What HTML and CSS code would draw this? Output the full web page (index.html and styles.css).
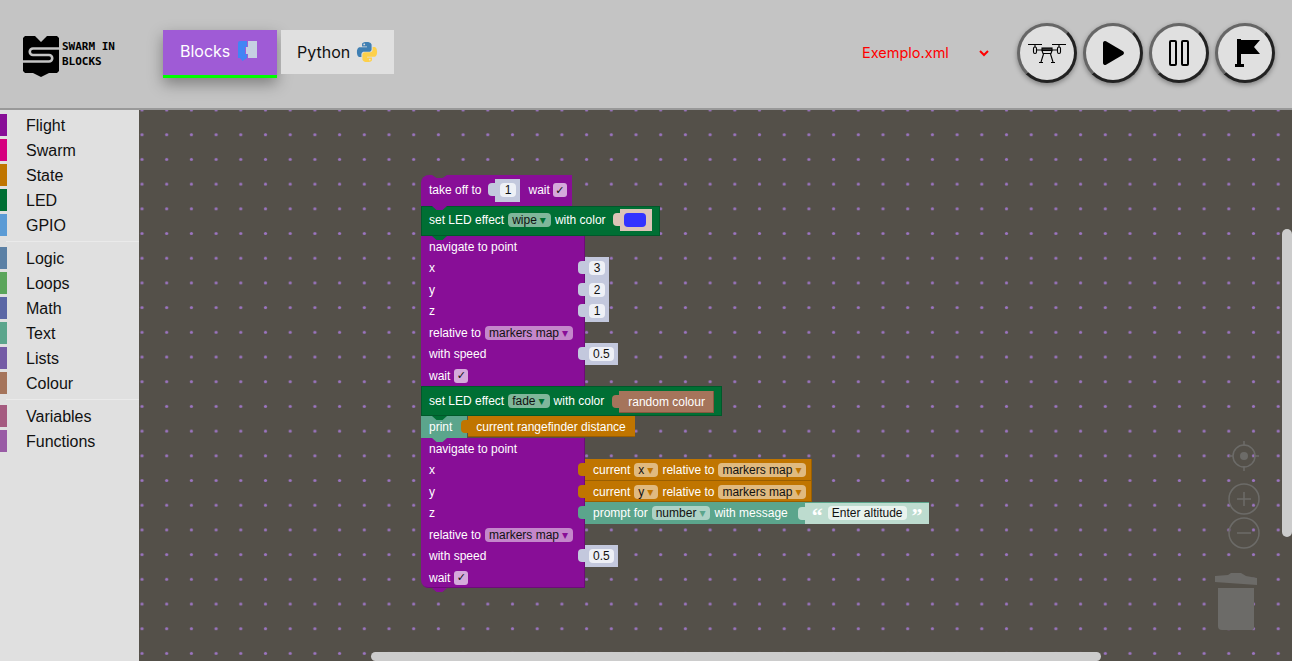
FILE: index.html
```html
<!DOCTYPE html>
<html lang="en">
<head>
    <meta charset="UTF-8">
    <meta name="viewport" content="width=device-width, initial-scale=1.0">
    <title>Swarm in Blocks</title>
    <link rel="stylesheet" href="styles.css">
</head>
<body>
    <header class="topbar">
        <div class="logo">
            <svg class="logo-mark" width="36" height="41" viewBox="23 36 36 41">
                <path d="M25 36h10l6 6 6-6h10l2 2v33l-2 2h-8l-8 4-8-4H25l-2-2V38z" fill="#000"/>
                <path d="M59 48.500H33a3 3 0 0 0 0 6.500h16a3.200 3.200 0 0 1 0 6.500H23" fill="none" stroke="#c4c4c4" stroke-width="2.600"/>
            </svg>
            <div class="logo-text">SWARM IN<br>BLOCKS</div>
        </div>
        <nav class="tabs">
            <div class="tab tab-active">Blocks
                <svg width="19" height="20" viewBox="0 0 19 20">
                    <path d="M0 2a2 2 0 0 1 2-2h7v6H7v7h2v4l-4.500 3L2 17H0z" fill="#4285f4"/>
                    <path d="M10 0h9v17h-9v-4H8V6h2z" fill="#c5d0e2"/>
                </svg>
            </div>
            <div class="tab tab-python">Python
                <svg width="22" height="22" viewBox="0 0 24 24">
                    <path d="M11.900 1C6.300 1 6.600 3.400 6.600 3.400v2.500H12v.8H4.500S1 6.300 1 12s3 5.500 3 5.500h1.900v-2.700s-.1-3 3-3h5.200s2.900 0 2.900-2.800V3.800S16.500 1 11.900 1zM9 2.700a1 1 0 1 1 0 2 1 1 0 0 1 0-2z" fill="#3f7fb3"/>
                    <path d="M12.100 23c5.600 0 5.300-2.400 5.300-2.400v-2.500H12v-.8h7.500S23 17.700 23 12s-3-5.500-3-5.500h-1.900v2.700s.1 3-3 3H9.900S7 12.200 7 15v5.200S7.500 23 12.100 23zM15 21.300a1 1 0 1 1 0-2 1 1 0 0 1 0 2z" fill="#fdd04a"/>
                </svg>
            </div>
        </nav>
        <div class="file-select">
            <span>Exemplo.xml</span>
            <svg width="10" height="7" viewBox="0 0 10 7"><path d="M1 1l4 4 4-4" fill="none" stroke="#f00" stroke-width="2"/></svg>
        </div>
        <div class="round-buttons">
            <button class="round-btn">
                <svg width="40" height="22" viewBox="0 0 40 22" fill="none" stroke="#000" stroke-width="1.100">
                    <path d="M1 2.500h14M25 2.500h14"/>
                    <path d="M8 3v2M32 3v2"/>
                    <rect x="6.500" y="5" width="3" height="6.500" rx="1.500"/>
                    <rect x="30.500" y="5" width="3" height="6.500" rx="1.500"/>
                    <path d="M9.500 8H15M25 8h5.500"/>
                    <rect x="15" y="6" width="10" height="2.500" fill="#333"/>
                    <path d="M15 8.500l1 3h8l1-3M16 11.500h8"/>
                    <path d="M16.500 12l-2.500 8M23.500 12l2.500 8M12 20.500h4M24 20.500h4"/>
                </svg>
            </button>
            <button class="round-btn">
                <svg width="24" height="26" viewBox="0 0 24 26"><path d="M2 3a2 2 0 0 1 3-1.700l17 10a2 2 0 0 1 0 3.400l-17 10A2 2 0 0 1 2 23z" fill="#000"/></svg>
            </button>
            <button class="round-btn">
                <svg width="20" height="26" viewBox="0 0 20 26" fill="none" stroke="#000" stroke-width="2">
                    <rect x="1" y="1" width="6" height="24" rx="1"/>
                    <rect x="13" y="1" width="6" height="24" rx="1"/>
                </svg>
            </button>
            <button class="round-btn">
                <svg class="flag" width="26" height="30" viewBox="0 0 26 30">
                    <path d="M2 1h4v25h3v3H0v-3h2z" fill="#000"/>
                    <path d="M6 2h19l-6 7 6 7H6z" fill="#000"/>
                </svg>
            </button>
        </div>
    </header>

    <main class="main">
        <aside class="toolbox">
            <div class="cat"><i class="c-flight"></i>Flight</div>
            <div class="cat"><i class="c-swarm"></i>Swarm</div>
            <div class="cat"><i class="c-state"></i>State</div>
            <div class="cat"><i class="c-led"></i>LED</div>
            <div class="cat"><i class="c-gpio"></i>GPIO</div>
            <div class="cat-sep"></div>
            <div class="cat"><i class="c-logic"></i>Logic</div>
            <div class="cat"><i class="c-loops"></i>Loops</div>
            <div class="cat"><i class="c-math"></i>Math</div>
            <div class="cat"><i class="c-text"></i>Text</div>
            <div class="cat"><i class="c-lists"></i>Lists</div>
            <div class="cat"><i class="c-colour"></i>Colour</div>
            <div class="cat-sep"></div>
            <div class="cat"><i class="c-vars"></i>Variables</div>
            <div class="cat"><i class="c-funcs"></i>Functions</div>
        </aside>

        <section class="workspace">
            <svg class="grid" width="100%" height="100%">
                <defs>
                    <pattern id="dots" x="-9.35" y="-12.35" width="24.7" height="24.7" patternUnits="userSpaceOnUse">
                        <circle cx="12.35" cy="12.35" r="1.6" fill="#9c74c2"/>
                    </pattern>
                </defs>
                <rect width="100%" height="100%" fill="url(#dots)"/>
            </svg>

            <div class="stack">
                <div class="block flight first notch takeoff">
                    <span>take off to</span>
                    <span class="value num"><b>1</b></span>
                    <span class="label-gap">wait</span>
                    <span class="check">✓</span>
                </div>
                <div class="block led notch led-row">
                    <span>set LED effect</span>
                    <span class="drop">wipe<em>▾</em></span>
                    <span>with color</span>
                    <span class="value swatch-value"><u class="swatch"></u></span>
                </div>

                <div class="nav">
                    <div class="nav-row"><div class="cell">navigate to point</div></div>
                    <div class="nav-row"><div class="cell">x</div><span class="value num attach"><b>3</b></span></div>
                    <div class="nav-row"><div class="cell">y</div><span class="value num attach"><b>2</b></span></div>
                    <div class="nav-row"><div class="cell">z</div><span class="value num attach"><b>1</b></span></div>
                    <div class="nav-row"><div class="cell">relative to <span class="drop">markers map<em>▾</em></span></div></div>
                    <div class="nav-row"><div class="cell">with speed</div><span class="value num attach"><b>0.5</b></span></div>
                    <div class="nav-row"><div class="cell">wait <span class="check">✓</span></div></div>
                </div>

                <div class="block led notch fade-row">
                    <span>set LED effect</span>
                    <span class="drop">fade<em>▾</em></span>
                    <span>with color</span>
                    <span class="value random">random colour</span>
                </div>
                <div class="block print notch print-row">
                    <span>print</span>
                    <span class="value range">current rangefinder distance</span>
                </div>

                <div class="nav">
                    <div class="nav-row"><div class="cell">navigate to point</div></div>
                    <div class="nav-row"><div class="cell">x</div>
                        <span class="value state attach">current <span class="drop">x<em>▾</em></span> relative to <span class="drop">markers map<em>▾</em></span></span>
                    </div>
                    <div class="nav-row"><div class="cell">y</div>
                        <span class="value state attach">current <span class="drop">y<em>▾</em></span> relative to <span class="drop">markers map<em>▾</em></span></span>
                    </div>
                    <div class="nav-row"><div class="cell">z</div>
                        <span class="value prompt attach">prompt for <span class="drop">number<em>▾</em></span> with message
                            <span class="value text-value"><q>“</q><b>Enter altitude</b><q>”</q></span>
                        </span>
                    </div>
                    <div class="nav-row"><div class="cell">relative to <span class="drop">markers map<em>▾</em></span></div></div>
                    <div class="nav-row"><div class="cell">with speed</div><span class="value num attach"><b>0.5</b></span></div>
                    <div class="nav-row"><div class="cell last">wait <span class="check">✓</span></div></div>
                </div>
            </div>

            <svg class="controls" width="50" height="195" viewBox="0 0 50 195" fill="none" stroke="#6c6b68" stroke-width="1.500">
                <circle cx="29" cy="16" r="11"/>
                <path d="M29 1v5M29 26v5M14 16h4M40 16h4"/>
                <circle cx="29" cy="16" r="4" fill="#6c6b68" stroke="none"/>
                <circle cx="29" cy="59" r="15"/>
                <path d="M22 59h14M29 52v14"/>
                <circle cx="29" cy="93" r="15"/>
                <path d="M22 93h14"/>
                <path d="M0 137l0-1 13-1 3-2h10l5 3 11 2v7L0 142z" fill="#6c6b68" stroke="none"/>
                <path d="M3 148h36v40a2 2 0 0 1-2 2H7a4 4 0 0 1-4-4z" fill="#6c6b68" stroke="none"/>
            </svg>
            <div class="scroll-v"></div>
            <div class="scroll-h"></div>
        </section>
    </main>
</body>
</html>
```

FILE: styles.css
```css
* {
    box-sizing: border-box;
}

html, body {
    height: 100%;
}

body {
    margin: 0;
    overflow: hidden;
    display: flex;
    flex-direction: column;
    font-family: "Liberation Sans", Arial, sans-serif;
}

/* top bar */
.topbar {
    height: 110px;
    flex: none;
    display: flex;
    align-items: flex-start;
    background-color: #c4c4c4;
    border-bottom: 2px solid #999;
}

.logo {
    width: 140px;
    margin: 36px 0 0 23px;
    display: flex;
}

.logo-mark {
    flex: none;
}

.logo-text {
    margin: 3px 0 0 3px;
    font-family: "DejaVu Sans Mono", monospace;
    font-weight: bold;
    font-size: 11px;
    line-height: 15px;
    color: #000;
    white-space: nowrap;
}

.tabs {
    display: flex;
    align-items: flex-start;
    gap: 4px;
    margin-top: 30px;
}

.tab {
    height: 44px;
    width: 113px;
    display: flex;
    align-items: center;
    gap: 6px;
    padding-left: 16px;
    font-family: Inter, sans-serif;
    font-size: 16px;
    color: #111;
    background-color: #e0e0e0;
}

.tab-python {
    padding-bottom: 1px;
}

.tab-active {
    height: 48px;
    width: 114px;
    gap: 8px;
    padding: 0 0 4px 17px;
    color: #fff;
    background-color: #9f5bd6;
    border-bottom: 3px solid #0f0;
    box-shadow: 0 6px 14px rgba(0, 0, 0, 0.35);
}

.file-select {
    width: 127px;
    margin: 44px 0 0 468px;
    display: flex;
    align-items: center;
    justify-content: space-between;
    font-family: Inter, sans-serif;
    font-size: 14.5px;
    line-height: 18px;
    color: #f00;
}

.round-buttons {
    display: flex;
    gap: 6px;
    margin: 23px 0 0 28px;
}

.round-btn {
    width: 60px;
    height: 60px;
    padding: 0;
    display: flex;
    align-items: center;
    justify-content: center;
    background-color: #e0e0e0;
    border: 3px solid;
    border-color: #666 #222 #222 #666;
    border-radius: 50%;
    box-shadow: 0 2px 5px rgba(0, 0, 0, 0.35);
}

.flag {
    margin-left: 6px;
}

/* main area */
.main {
    flex: 1;
    display: flex;
    min-height: 0;
}

.toolbox {
    width: 139px;
    flex: none;
    padding-top: 3px;
    background-color: #e0e0e0;
}

.cat {
    height: 25px;
    display: flex;
    align-items: center;
    padding-left: 26px;
    position: relative;
    font-size: 16px;
    color: #111;
}

.cat i {
    position: absolute;
    left: 0;
    top: 1px;
    width: 7px;
    height: 22px;
}

.cat-sep {
    height: 8px;
    margin-left: 6px;
    padding-top: 3px;
}

.cat-sep::after {
    content: "";
    display: block;
    height: 1px;
    background-color: #eaeaea;
}

.c-flight { background-color: #880e97; }
.c-swarm { background-color: #d6007e; }
.c-state { background-color: #c07500; }
.c-led { background-color: #006f34; }
.c-gpio { background-color: #5b9bd5; }
.c-logic { background-color: #5b80a5; }
.c-loops { background-color: #5ba55b; }
.c-math { background-color: #5b67a5; }
.c-text { background-color: #5ba58c; }
.c-lists { background-color: #745ba5; }
.c-colour { background-color: #a5745b; }
.c-vars { background-color: #a55b80; }
.c-funcs { background-color: #995ba5; }

.workspace {
    flex: 1;
    position: relative;
    overflow: hidden;
    background-color: #545049;
}

.grid {
    position: absolute;
    left: 0;
    top: 0;
}

/* blocks */
.stack {
    position: absolute;
    left: 282px;
    top: 65px;
    width: 520px;
    display: flex;
    flex-direction: column;
    align-items: flex-start;
    font-size: 12px;
    color: #fff;
    white-space: nowrap;
}

.block {
    position: relative;
    display: flex;
    align-items: center;
    gap: 4px;
    padding-left: 8px;
}

.flight { background-color: #880e97; }
.led {
    background-color: #006f34;
    box-shadow: inset 0 0 0 1px #00592a;
}
.print { background-color: #5ba58c; }

.notch::after {
    content: "";
    position: absolute;
    z-index: 3;
    left: 11px;
    bottom: -4px;
    width: 15px;
    height: 4px;
    background-color: inherit;
    clip-path: polygon(0 0, 100% 0, 70% 100%, 30% 100%);
}

.first {
    border-radius: 8px 0 0 0;
}

.first::before {
    content: "";
    position: absolute;
    left: 11px;
    top: 0;
    width: 15px;
    height: 3px;
    background-color: #545049;
    clip-path: polygon(0 0, 100% 0, 70% 100%, 30% 100%);
}

.takeoff {
    width: 151px;
    height: 31px;
    padding-bottom: 1px;
}

.takeoff .check {
    margin-left: -1px;
}

.led-row {
    width: 239px;
    height: 30px;
    padding-bottom: 2px;
}

.fade-row {
    width: 301px;
    height: 30px;
}

.print-row {
    width: 214px;
    height: 22px;
    background: linear-gradient(to right, #5ba58c 46px, transparent 46px);
    align-items: flex-start;
    padding-top: 4px;
}

.print-row::after {
    background: #5ba58c;
}

/* pieces inside a block */
.drop {
    display: inline-flex;
    align-items: center;
    height: 14px;
    padding: 0 5px 0 4px;
    border-radius: 4px;
    color: #111;
    background-color: rgba(255, 255, 255, 0.5);
}

.drop em {
    margin-left: 3px;
    font-style: normal;
    font-size: 12px;
    font-family: "DejaVu Sans", sans-serif;
    line-height: 12px;
    opacity: 0.75;
}

.led .drop em { color: #006f34; opacity: 1; }
.cell .drop em { color: #880e97; opacity: 1; }

.check {
    display: inline-flex;
    align-items: center;
    justify-content: center;
    width: 14px;
    height: 14px;
    border-radius: 3px;
    font-family: "DejaVu Sans", sans-serif;
    font-size: 11px;
    color: #111;
    background-color: rgba(255, 255, 255, 0.65);
    vertical-align: -3px;
}

.value {
    position: relative;
    display: inline-flex;
    align-items: center;
}

.value::before {
    content: "";
    position: absolute;
    left: -7px;
    top: 4px;
    width: 8px;
    height: 13px;
    border-radius: 4px 0 0 4px;
    background-color: inherit;
}

.num {
    height: 22px;
    justify-content: center;
    padding: 0 4px;
    background-color: #c3c8dd;
}

.num b {
    min-width: 16px;
    height: 14px;
    padding: 0 4px;
    display: flex;
    align-items: center;
    justify-content: center;
    font-weight: normal;
    border-radius: 4px;
    color: #111;
    background-color: #eef0f6;
}

.takeoff .num {
    width: 25px;
    height: 23px;
    margin-left: 10px;
}

.label-gap {
    margin-left: 4px;
}

.swatch-value {
    width: 32px;
    height: 22px;
    margin-left: 10px;
    padding-left: 4px;
    background-color: #dcc4b8;
}

.swatch {
    display: block;
    width: 22px;
    height: 14px;
    border-radius: 4px;
    background-color: #33f;
}

.random {
    height: 22px;
    margin-left: 11px;
    margin-top: 2px;
    padding: 0 9px;
    background-color: #a5745b;
    box-shadow: inset -1px -1px 0 #85583f;
}

.range {
    height: 21px;
    margin-left: 12px;
    margin-top: -4px;
    padding: 0 9px 0 8px;
    background-color: #c07500;
    box-shadow: inset 0 -1px 0 #9a5e00;
}

/* navigate block */
.nav {
    display: flex;
    flex-direction: column;
}

.nav-row {
    height: 21px;
    display: flex;
    align-items: stretch;
}

.nav-row:nth-child(even) {
    height: 22px;
}

.nav .num {
    height: auto;
}

.cell {
    width: 164px;
    flex: none;
    display: flex;
    align-items: center;
    gap: 4px;
    padding-left: 8px;
    background-color: #880e97;
    box-shadow: inset -1px 0 0 #6d0b79;
}

.cell.last {
    position: relative;
    border-radius: 0 0 0 8px;
    box-shadow: inset -1px -1px 0 #6d0b79;
}

.cell.last::after {
    content: "";
    position: absolute;
    left: 11px;
    bottom: -4px;
    width: 15px;
    height: 4px;
    background-color: #880e97;
    clip-path: polygon(0 0, 100% 0, 70% 100%, 30% 100%);
}

.attach {
    flex: none;
}

.state {
    gap: 4px;
    width: 227px;
    padding-left: 8px;
    background-color: #c07500;
    box-shadow: inset -1px -1px 0 #9a5e00;
}

.state .drop em { color: #c07500; opacity: 1; }

.prompt {
    gap: 4px;
    padding-left: 8px;
    background-color: #5ba58c;
}

.prompt .drop em { color: #5ba58c; opacity: 1; }

.text-value {
    height: 21px;
    margin-left: 13px;
    padding: 0 6px 0 7px;
    gap: 5px;
    color: #fff;
    background-color: #bddccf;
}

.text-value b {
    height: 14px;
    padding: 0 4px;
    display: flex;
    align-items: center;
    font-weight: normal;
    border-radius: 4px;
    color: #111;
    background-color: #e8f3ee;
}

.text-value q {
    quotes: none;
    font-family: "Liberation Serif", serif;
    font-size: 22px;
    font-weight: bold;
    line-height: 20px;
    padding-top: 6px;
}

.controls {
    position: absolute;
    left: 1076px;
    top: 330px;
}

.scroll-v {
    position: absolute;
    right: 0;
    top: 119px;
    width: 10px;
    height: 308px;
    border-radius: 5px;
    background-color: #ccc;
}

.scroll-h {
    position: absolute;
    left: 232px;
    bottom: 0;
    width: 730px;
    height: 9px;
    border-radius: 5px;
    background-color: #ccc;
}
```
